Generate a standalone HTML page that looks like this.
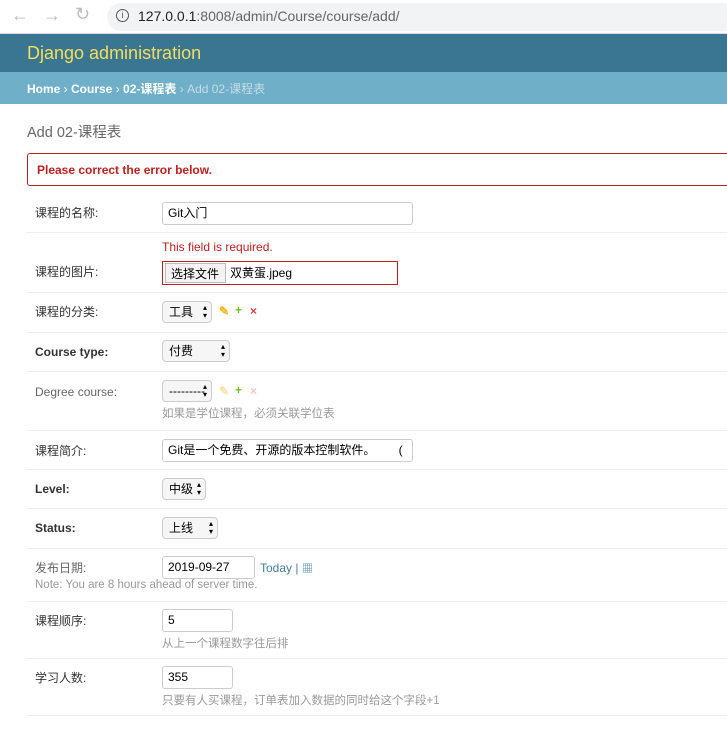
<!DOCTYPE html>
<html><head><meta charset="utf-8"><style>
*{margin:0;padding:0;box-sizing:border-box}
body{width:727px;height:729px;overflow:hidden;background:#fff;font-family:"Liberation Sans","Noto Sans CJK SC",sans-serif;font-size:12px;color:#333;position:relative}
.a{position:absolute;white-space:nowrap}
.chrome{position:absolute;left:0;top:0;width:727px;height:34px;background:#fff;border-bottom:1px solid #ddd}
.url{position:absolute;left:107px;top:3px;width:630px;height:28px;background:#f1f3f4;border-radius:14px}
.hdr{position:absolute;left:0;top:34px;width:727px;height:38px;background:#3a7691}
.bc{position:absolute;left:0;top:72px;width:727px;height:32px;background:#6fafc8}
.line{position:absolute;left:27px;width:700px;height:1px;background:#eee}
.lbl{position:absolute;left:35px;font-size:12px;color:#333}
.b{font-weight:bold}
.inp{position:absolute;border:1px solid #ccc;border-radius:3px;background:#fff;padding:3px 5px;font-size:12px;color:#000;height:23px;line-height:15px}
.sel{position:absolute;border:1px solid #ccc;border-radius:4px;background:#f6f6f6;padding:3px 6px;font-size:12px;color:#000;height:22px;line-height:14px}
.sel:after{content:"▴\A▾";white-space:pre;position:absolute;right:4px;top:2px;font-size:8px;line-height:8px}
.help{position:absolute;left:162px;color:#999;font-size:11.5px}
.ic{position:absolute;font-size:12px;font-weight:bold}
</style></head><body>
<div class="chrome">
<div class="a" style="left:11px;top:5px;font-size:18px;color:#bbb">←</div>
<div class="a" style="left:43px;top:5px;font-size:18px;color:#bbb">→</div>
<div class="a" style="left:75px;top:4px;font-size:18px;color:#bbb">↻</div>
<div class="url"></div>
<div class="a" style="left:116px;top:9px;width:13px;height:13px;border:1.5px solid #555;border-radius:50%;font-size:9px;text-align:center;line-height:10px;color:#555">i</div>
<div class="a" style="left:138px;top:8px;font-size:14px;color:#222">127.0.0.1<span style="color:#666">:8008/admin/Course/course/add/</span></div>
</div>
<div class="hdr"><div class="a" style="left:27px;top:9px;font-size:18px;color:#f5dd5d">Django administration</div></div>
<div class="bc"><div class="a" style="left:27px;top:8px;font-size:12px;color:#fff"><b>Home</b> › <b>Course</b> › <b>02-课程表</b> <span style="color:#c4dce8">› Add 02-课程表</span></div></div>
<div class="a" style="left:27px;top:121px;font-size:14.5px;color:#666">Add 02-课程表</div>
<div class="a" style="left:27px;top:153px;width:710px;height:33px;border:1px solid #ba2121;border-radius:3px"></div>
<div class="a" style="left:37px;top:163px;font-size:12px;color:#ba2121;font-weight:bold">Please correct the error below.</div>

<div class="lbl" style="top:204px">课程的名称:</div>
<div class="inp" style="left:162px;top:202px;width:251px">Git入门</div>
<div class="line" style="top:232px"></div>

<div class="a" style="left:162px;top:240px;color:#ba2121">This field is required.</div>
<div class="lbl" style="top:263px">课程的图片:</div>
<div class="a" style="left:162px;top:261px;width:236px;height:24px;border:1px solid #ba2121"></div>
<div class="a" style="left:165px;top:263px;width:61px;height:20px;border:1px solid #bbb;background:#f3f3f3;font-size:12px;color:#000;padding:1px 5px">选择文件</div>
<div class="a" style="left:230px;top:264px;color:#000">双黄蛋.jpeg</div>
<div class="line" style="top:292px"></div>

<div class="lbl" style="top:303px">课程的分类:</div>
<div class="sel" style="left:162px;top:301px;width:50px">工具</div>
<div class="ic" style="left:219px;top:304px;color:#efb80b">✎</div>
<div class="ic" style="left:235px;top:303px;color:#70bf2b">+</div>
<div class="ic" style="left:250px;top:304px;color:#dd4646">×</div>
<div class="line" style="top:332px"></div>

<div class="lbl b" style="top:345px">Course type:</div>
<div class="sel" style="left:162px;top:340px;width:68px">付费</div>
<div class="line" style="top:371px"></div>

<div class="lbl" style="top:385px;color:#666">Degree course:</div>
<div class="sel" style="left:162px;top:380px;width:50px">---------</div>
<div class="ic" style="left:219px;top:384px;color:#f5e3a8">✎</div>
<div class="ic" style="left:235px;top:383px;color:#70bf2b">+</div>
<div class="ic" style="left:250px;top:384px;color:#f0c8c8">×</div>
<div class="help" style="top:405px">如果是学位课程，必须关联学位表</div>
<div class="line" style="top:430px"></div>

<div class="lbl" style="top:442px">课程简介:</div>
<div class="inp" style="left:162px;top:439px;width:251px">Git是一个免费、开源的版本控制软件。&nbsp;&nbsp;&nbsp;&nbsp;&nbsp;&nbsp;&nbsp;(</div>
<div class="line" style="top:469px"></div>

<div class="lbl b" style="top:482px">Level:</div>
<div class="sel" style="left:162px;top:478px;width:44px">中级</div>
<div class="line" style="top:508px"></div>

<div class="lbl b" style="top:521px">Status:</div>
<div class="sel" style="left:162px;top:517px;width:56px">上线</div>
<div class="line" style="top:548px"></div>

<div class="lbl" style="top:559px;color:#666">发布日期:</div>
<div class="inp" style="left:162px;top:556px;width:93px">2019-09-27</div>
<div class="a" style="left:260px;top:560px;color:#447e9b">Today | <span style="font-size:11px">▦</span></div>
<div class="a" style="left:35px;top:579px;color:#999;font-size:11.5px">Note: You are 8 hours ahead of server time.</div>
<div class="line" style="top:601px"></div>

<div class="lbl" style="top:612px">课程顺序:</div>
<div class="inp" style="left:162px;top:609px;width:71px">5</div>
<div class="help" style="top:635px">从上一个课程数字往后排</div>
<div class="line" style="top:658px"></div>

<div class="lbl" style="top:669px">学习人数:</div>
<div class="inp" style="left:162px;top:666px;width:71px">355</div>
<div class="help" style="top:692px">只要有人买课程，订单表加入数据的同时给这个字段+1</div>
<div class="line" style="top:715px"></div>
</body></html>
